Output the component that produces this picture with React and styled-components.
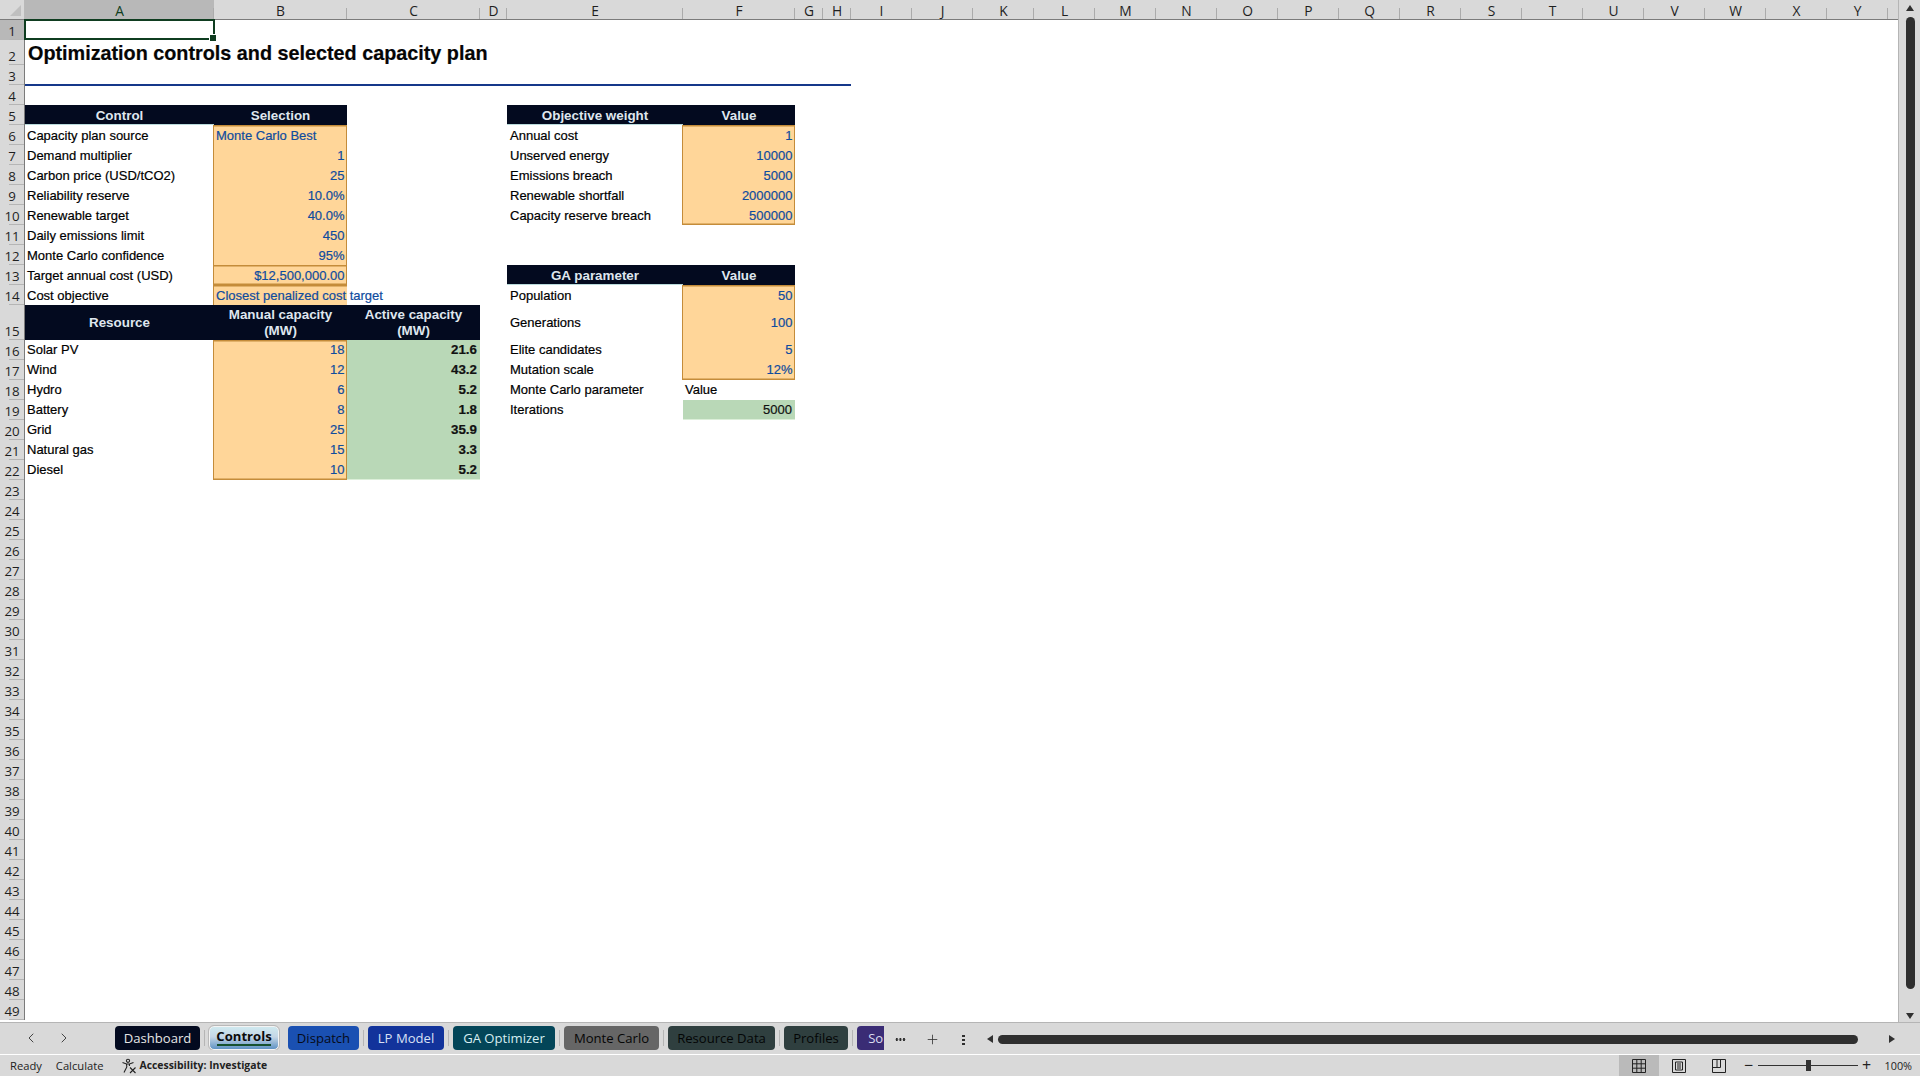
import React from "react";
import styled, { createGlobalStyle } from "styled-components";
import { ChevronLeft, ChevronRight, Plus } from "lucide-react";

const GlobalStyle = createGlobalStyle`
    html, body {
        margin: 0;
        padding: 0;
        height: 100%;
        overflow: hidden;
        background: #fff;
    }
    * { box-sizing: border-box; }
`;

const ui = `"Open Sans", "Noto Sans", sans-serif`;
const cellFont = `"Liberation Sans", Arial, sans-serif`;
const gridCols = "25px 189px 133px 133px 27px 176px 112px 28px 28px";
const inputEdge = "#c48c3a";

const Page = styled.div`
    width: 100%;
    height: 100vh;
    display: flex;
    flex-direction: column;
    background: #d9d9d9;
`;
const Main = styled.div`
    flex: 1;
    min-height: 0;
    display: flex;
`;
const Workbook = styled.div`
    flex: 1;
    min-width: 0;
    display: flex;
    flex-direction: column;
    background: #fff;
    overflow: hidden;
`;

const ColumnBar = styled.div`
    height: 20px;
    flex: none;
    display: flex;
    background: #d9d9d9;
    border-bottom: 1px solid #7b7b7b;
`;
const Corner = styled.div`
    width: 25px;
    flex: none;
    display: flex;
    align-items: flex-end;
    justify-content: flex-end;
    padding: 0 3px 3px 0;
    border-right: 1px solid #b9b9b9;
    &::after {
        content: "";
        border-style: solid;
        border-width: 0 0 11px 11px;
        border-color: transparent transparent #bfbfbf transparent;
    }
`;
const ColHead = styled.div`
    width: ${(p) => p.$w}px;
    flex: none;
    position: relative;
    text-align: center;
    font: 13.8px/21px ${ui};
    color: ${(p) => (p.$active ? "#0f3d20" : "#1f1f1f")};
    background: ${(p) => (p.$active ? "#b8b8b8" : "transparent")};
    &::after {
        content: "";
        position: absolute;
        right: 0;
        bottom: 0;
        height: 11px;
        width: 1px;
        background: #ababab;
    }
`;

const Rows = styled.div`
    flex: 1;
    min-height: 0;
`;
// from row 15 down the sheet's text sits a little higher in its row
const Row = styled.div`
    --cell-top: ${(p) => (p.$low ? "0px" : "2px")};
    height: ${(p) => p.$h}px;
    display: grid;
    grid-template-columns: ${gridCols};
    grid-template-rows: ${(p) => p.$h}px;
`;
const RowHead = styled.div`
    grid-column: 1;
    grid-row: 1;
    height: 100%;
    position: relative;
    display: flex;
    align-items: flex-end;
    justify-content: center;
    font: 13.3px/17px ${ui};
    color: #1f1f1f;
    background: ${(p) => (p.$active ? "#b8b8b8" : "#d9d9d9")};
    border-right: 1px solid #7b7b7b;
    &::after {
        content: "";
        position: absolute;
        right: 0;
        bottom: 0;
        height: 1px;
        width: 15px;
        background: #b5b5b5;
    }
`;

const Cell = styled.div`
    grid-column: ${(p) => p.$col};
    grid-row: 1;
    min-width: 0;
    display: flex;
    align-items: center;
    justify-content: ${(p) => (p.$right ? "flex-end" : "flex-start")};
    padding: var(--cell-top) 3px 0 ${(p) => (p.$col === 6 ? 3 : 2)}px;
    white-space: nowrap;
    font: 13px/16px ${cellFont};
    -webkit-text-stroke: 0.2px currentColor;
    color: #000;
`;
const Selected = styled.div`
    grid-column: 2;
    grid-row: 1;
    position: relative;
    z-index: 2;
    margin: -1px -1px 0 -1px;
    border: 2px solid #0f3d20;
    &::after {
        content: "";
        position: absolute;
        right: -4px;
        bottom: -4px;
        width: 6px;
        height: 6px;
        background: #0f3d20;
        border: 1px solid #fff;
    }
`;
const Title = styled(Cell)`
    font: bold 19.8px/25px ${cellFont};
    padding-left: 3px;
    color: #050505;
`;
const Rule = styled.div`
    grid-column: 2 / 10;
    grid-row: 1;
    align-self: end;
    height: 2px;
    margin-bottom: -1px;
    background: #15388a;
`;
const Head = styled(Cell)`
    justify-content: center;
    text-align: center;
    padding: calc(var(--cell-top) + 1px) 2px 0;
    font-size: 13.4px;
    font-weight: 700;
    line-height: 16.5px;
    white-space: pre-line;
    -webkit-text-stroke: 0;
    color: #dfe6ee;
    background: #030a1f;
    box-shadow: inset 0 -1px 0 ${(p) => (p.$open ? "#b9dadb" : "#030a1f")};
`;
const Input = styled(Cell)`
    margin-left: -1px;
    padding: var(--cell-top) 1.5px 0 2px;
    color: #0f4c9e;
    background: #ffd699;
    border-left: 1.5px solid ${inputEdge};
    border-right: ${(p) => (p.$noRight ? "none" : `1.5px solid ${inputEdge}`)};
    box-shadow: ${(p) => (p.$top ? `inset 0 1.5px 0 ${inputEdge}` : "inset 0 0 0 transparent")},
        ${(p) => (p.$bottom ? `inset 0 -1.5px 0 ${inputEdge}` : "inset 0 0 0 transparent")};
    overflow: visible;
`;
const Active = styled(Cell)`
    justify-content: flex-end;
    font-size: ${(p) => (p.$plain ? "13px" : "13.33px")};
    font-weight: ${(p) => (p.$plain ? 400 : 700)};
    color: #111;
    background: #b9d8b7;
    box-shadow: ${(p) => (p.$last ? "inset 0 -1px 0 #dcefd9" : "none")};
`;

const leftInputs = [
    ["Capacity plan source", "Monte Carlo Best"],
    ["Demand multiplier", "1"],
    ["Carbon price (USD/tCO2)", "25"],
    ["Reliability reserve", "10.0%"],
    ["Renewable target", "40.0%"],
    ["Daily emissions limit", "450"],
    ["Monte Carlo confidence", "95%"],
];
const weights = [
    ["Annual cost", "1"],
    ["Unserved energy", "10000"],
    ["Emissions breach", "5000"],
    ["Renewable shortfall", "2000000"],
    ["Capacity reserve breach", "500000"],
];
const gaParams = [
    ["Population", "50"],
    ["Generations", "100"],
    ["Elite candidates", "5"],
    ["Mutation scale", "12%"],
];
const resources = [
    ["Solar PV", "18", "21.6"],
    ["Wind", "12", "43.2"],
    ["Hydro", "6", "5.2"],
    ["Battery", "8", "1.8"],
    ["Grid", "25", "35.9"],
    ["Natural gas", "15", "3.3"],
    ["Diesel", "10", "5.2"],
];

// what each sheet row holds, keyed by row number
const content = { 1: [<Selected key="sel" />], 2: [<Title key="t" $col={2}>Optimization controls and selected capacity plan</Title>], 3: [<Rule key="r" />] };
const add = (n, ...cells) => {
    content[n] = [...(content[n] || []), ...cells];
};

add(5, <Head key="a" $col={2} $open>Control</Head>, <Head key="b" $col={3}>Selection</Head>);
leftInputs.forEach(([label, value], i) => {
    add(
        6 + i,
        <Cell key="a" $col={2}>{label}</Cell>,
        <Input key="b" $col={3} $right={i > 0} $top={i === 0}>{value}</Input>
    );
});
add(13, <Cell key="a" $col={2}>Target annual cost (USD)</Cell>, <Input key="b" $col={3} $right $top $bottom>$12,500,000.00</Input>);
add(14, <Cell key="a" $col={2}>Cost objective</Cell>, <Input key="b" $col={3} $top $noRight>Closest penalized cost target</Input>);
add(
    15,
    <Head key="a" $col={2}>Resource</Head>,
    <Head key="b" $col={3}>{"Manual capacity\n(MW)"}</Head>,
    <Head key="c" $col={4}>{"Active capacity\n(MW)"}</Head>
);
resources.forEach(([name, manual, active], i) => {
    const last = i === resources.length - 1;
    add(
        16 + i,
        <Cell key="a" $col={2}>{name}</Cell>,
        <Input key="b" $col={3} $right $top={i === 0} $bottom={last}>{manual}</Input>,
        <Active key="c" $col={4} $last={last}>{active}</Active>
    );
});

add(5, <Head key="e" $col={6} $open>Objective weight</Head>, <Head key="f" $col={7}>Value</Head>);
weights.forEach(([label, value], i) => {
    add(
        6 + i,
        <Cell key="e" $col={6}>{label}</Cell>,
        <Input key="f" $col={7} $right $top={i === 0} $bottom={i === weights.length - 1}>{value}</Input>
    );
});
add(13, <Head key="e" $col={6} $open>GA parameter</Head>, <Head key="f" $col={7}>Value</Head>);
gaParams.forEach(([label, value], i) => {
    add(
        14 + i,
        <Cell key="e" $col={6}>{label}</Cell>,
        <Input key="f" $col={7} $right $top={i === 0} $bottom={i === gaParams.length - 1}>{value}</Input>
    );
});
add(18, <Cell key="e" $col={6}>Monte Carlo parameter</Cell>, <Cell key="f" $col={7}>Value</Cell>);
add(19, <Cell key="e" $col={6}>Iterations</Cell>, <Active key="f" $col={7} $plain $last>5000</Active>);

const columns = [
    ["A", 189], ["B", 133], ["C", 133], ["D", 27], ["E", 176], ["F", 112], ["G", 28], ["H", 28],
    ..."IJKLMNOPQRSTUVWXY".split("").map((c) => [c, 61]),
];
const rowHeight = (n) => (n === 2 ? 25 : n === 15 ? 35 : 20);
const rowNumbers = Array.from({ length: 49 }, (_, i) => i + 1);

const VScroll = styled.div`
    width: 22px;
    flex: none;
    display: flex;
    flex-direction: column;
    align-items: center;
    padding-left: 1px;
    border-left: 1px solid #b5b5b5;
    background: #d9d9d9;
`;
const ArrowUp = styled.div`
    margin-top: 5px;
    flex: none;
    border-style: solid;
    border-width: 0 4.5px 6px 4.5px;
    border-color: transparent transparent #303030 transparent;
`;
const ArrowDown = styled.div`
    margin: 0 0 3px;
    flex: none;
    border-style: solid;
    border-width: 6px 4.5px 0 4.5px;
    border-color: #303030 transparent transparent transparent;
`;
const VThumb = styled.div`
    width: 9px;
    height: 972px;
    margin: 6px 0 auto;
    border-radius: 5px;
    background: #2f2f2f;
`;

const TabBar = styled.div`
    height: 33px;
    flex: none;
    display: flex;
    align-items: flex-start;
    background: #d9d9d9;
    border-top: 1px solid #b5b5b5;
    border-bottom: 1px solid #fff;
`;
const NavButtons = styled.div`
    width: 115px;
    flex: none;
    display: flex;
    gap: 17px;
    padding: 7px 0 0 23px;
    color: #444;
`;
const TabStrip = styled.div`
    width: 769px;
    flex: none;
    display: flex;
    overflow: hidden;
    padding-top: 3px;
`;
const Tab = styled.div`
    width: ${(p) => p.$w}px;
    flex: none;
    height: 24px;
    margin-right: 9px;
    position: relative;
    display: flex;
    align-items: center;
    justify-content: center;
    border-radius: 4px;
    font: 13.1px/24px ${ui};
    color: ${(p) => p.$fg};
    background: ${(p) => p.$bg};
    &::after {
        content: "";
        position: absolute;
        right: -5px;
        top: 4px;
        height: 16px;
        width: 1px;
        background: #b5b5b5;
    }
`;
const ActiveTab = styled(Tab)`
    font-weight: 700;
    align-items: flex-start;
    line-height: 19px;
    border: 1px solid #f4f4f4;
    outline: 1px solid #b9b9b9;
    border-radius: 5px;
    background: linear-gradient(#cfe9ef, #c5d6e6 45%, #5f93c4);
    &::before {
        content: "";
        position: absolute;
        left: 7px;
        right: 7px;
        bottom: 3px;
        height: 2px;
        background: #16512f;
    }
    &::after {
        display: none;
    }
`;
const TabTools = styled.div`
    width: 101px;
    flex: none;
    display: flex;
    align-items: center;
    height: 22px;
    margin-top: 5px;
    color: #333;
`;
const Dots = styled.span`
    width: 11px;
    height: 3px;
    margin-left: 11px;
    background: radial-gradient(circle, #2f2f2f 1.2px, transparent 1.4px) 0 0 / 3.6px 3px;
`;
const AddTab = styled.span`
    margin-left: 19px;
    display: flex;
`;
const Kebab = styled.span`
    margin-left: 22px;
    width: 3px;
    height: 11px;
    background: radial-gradient(circle, #2f2f2f 1.3px, transparent 1.5px) 0 0 / 3px 4px;
`;
const HScroll = styled.div`
    flex: 1;
    display: flex;
    align-items: center;
    height: 22px;
    margin-top: 5px;
    padding: 0 23px 0 0;
`;
const ArrowLeft = styled.div`
    flex: none;
    margin-left: 2px;
    border-style: solid;
    border-width: 4.5px 6px 4.5px 0;
    border-color: transparent #303030 transparent transparent;
`;
const ArrowRight = styled.div`
    flex: none;
    margin-left: 31px;
    border-style: solid;
    border-width: 4.5px 0 4.5px 6px;
    border-color: transparent transparent transparent #303030;
`;
const HThumb = styled.div`
    width: 860px;
    height: 9px;
    margin-left: 5px;
    flex: none;
    border-radius: 5px;
    background: #2f2f2f;
`;

const StatusBar = styled.div`
    height: 21px;
    flex: none;
    display: flex;
    align-items: center;
    font: 11.2px/21px ${ui};
    color: #222;
    background: #d9d9d9;
`;
const StatusText = styled.span`
    margin-left: ${(p) => p.$gap}px;
`;
const A11y = styled.span`
    margin-left: 18px;
    display: flex;
    align-items: center;
    gap: 2px;
    font-weight: 700;
    font-size: 10.4px;
`;
const StatusRight = styled.div`
    margin-left: auto;
    display: flex;
    align-items: center;
    height: 100%;
`;
const ViewButton = styled.div`
    width: 40px;
    height: 100%;
    display: flex;
    align-items: center;
    justify-content: center;
    background: ${(p) => (p.$on ? "#bababa" : "transparent")};
`;
const Zoomer = styled.div`
    margin-left: 4.5px;
    display: flex;
    align-items: center;
    gap: 4px;
`;
const ZoomSign = styled.span`
    font: 16px/21px ${ui};
    width: 10px;
    text-align: center;
    color: #222;
`;
const Slider = styled.div`
    width: 100px;
    height: 1px;
    position: relative;
    background: #333;
    &::after {
        content: "";
        position: absolute;
        left: 48px;
        top: -5px;
        width: 5px;
        height: 11px;
        background: #333;
    }
`;
const Percent = styled.span`
    margin: 0 8px 0 13px;
    font-size: 10.8px;
`;

const tabs = [
    { name: "Dashboard", w: 85, bg: "#030a1f", fg: "#e6e6e6" },
    { name: "Controls", w: 70, active: true, bg: "", fg: "#0b0b0b" },
    { name: "Dispatch", w: 71, bg: "#1a50b2", fg: "#060b18" },
    { name: "LP Model", w: 76, bg: "#12339b", fg: "#d9e1f5" },
    { name: "GA Optimizer", w: 102, bg: "#034558", fg: "#d6eef2" },
    { name: "Monte Carlo", w: 95, bg: "#666666", fg: "#050505" },
    { name: "Resource Data", w: 107, bg: "#2f3f3f", fg: "#030505" },
    { name: "Profiles", w: 64, bg: "#2f3f3f", fg: "#030505" },
    { name: "Solver", w: 60, bg: "#3a2c75", fg: "#dcdcf0" },
];

const AccessIcon = () => (
    <svg width="16" height="16" viewBox="0 0 16 16" fill="none" stroke="#222" strokeWidth="1.1">
        <circle cx="7" cy="2.8" r="1.6" />
        <path d="M1.5 4.5 L5.5 6 H8.5 L12.5 4.5" />
        <path d="M5.5 6 L5.8 9 L3 14.5 M8.5 6 L8.4 8" />
        <path d="M9 9.5 L14.5 15 M14.5 9.5 L9 15" />
    </svg>
);
const GridIcon = () => (
    <svg width="14" height="14" viewBox="0 0 14 14" fill="none" stroke="#222" strokeWidth="1">
        <path d="M0.5 0.5 H13.5 V13.5 H0.5 Z M0.5 4.8 H13.5 M0.5 9.2 H13.5 M4.8 0.5 V13.5 M9.2 0.5 V13.5" />
    </svg>
);
const PageIcon = () => (
    <svg width="14" height="14" viewBox="0 0 14 14" fill="none" stroke="#222" strokeWidth="1">
        <path d="M0.5 0.5 H13.5 V13.5 H0.5 Z M3.5 3 H10.5 V11 H3.5 Z M5 5 H9 M5 7 H9 M5 9 H9" />
    </svg>
);
const BreakIcon = () => (
    <svg width="14" height="14" viewBox="0 0 14 14" fill="none" stroke="#222" strokeWidth="1">
        <path d="M0.5 0.5 H13.5 V13.5 H0.5 Z M0.5 8.5 H8.5 V0.5 M5 0.5 V8.5" />
    </svg>
);

const App = () => {
    return (
        <>
            <GlobalStyle />
            <Page>
                <Main>
                    <Workbook>
                        <ColumnBar>
                            <Corner />
                            {columns.map(([c, w]) => (
                                <ColHead key={c} $w={w} $active={c === "A"}>{c}</ColHead>
                            ))}
                        </ColumnBar>
                        <Rows>
                            {rowNumbers.map((n) => (
                                <Row key={n} $h={rowHeight(n)} $low={n >= 15}>
                                    <RowHead $active={n === 1}>{n}</RowHead>
                                    {content[n]}
                                </Row>
                            ))}
                        </Rows>
                    </Workbook>
                    <VScroll>
                        <ArrowUp />
                        <VThumb />
                        <ArrowDown />
                    </VScroll>
                </Main>
                <TabBar>
                    <NavButtons>
                        <ChevronLeft size={16} strokeWidth={1.5} />
                        <ChevronRight size={16} strokeWidth={1.5} />
                    </NavButtons>
                    <TabStrip>
                        {tabs.map((t) =>
                            t.active ? (
                                <ActiveTab key={t.name} $w={t.w} $fg={t.fg}>{t.name}</ActiveTab>
                            ) : (
                                <Tab key={t.name} $w={t.w} $bg={t.bg} $fg={t.fg}>{t.name}</Tab>
                            )
                        )}
                    </TabStrip>
                    <TabTools>
                        <Dots />
                        <AddTab><Plus size={15} strokeWidth={1.3} /></AddTab>
                        <Kebab />
                    </TabTools>
                    <HScroll>
                        <ArrowLeft />
                        <HThumb />
                        <ArrowRight />
                    </HScroll>
                </TabBar>
                <StatusBar>
                    <StatusText $gap={10}>Ready</StatusText>
                    <StatusText $gap={14}>Calculate</StatusText>
                    <A11y><AccessIcon />Accessibility: Investigate</A11y>
                    <StatusRight>
                        <ViewButton $on><GridIcon /></ViewButton>
                        <ViewButton><PageIcon /></ViewButton>
                        <ViewButton><BreakIcon /></ViewButton>
                        <Zoomer>
                            <ZoomSign>−</ZoomSign>
                            <Slider />
                            <ZoomSign>+</ZoomSign>
                        </Zoomer>
                        <Percent>100%</Percent>
                    </StatusRight>
                </StatusBar>
            </Page>
        </>
    );
};

export default App;
